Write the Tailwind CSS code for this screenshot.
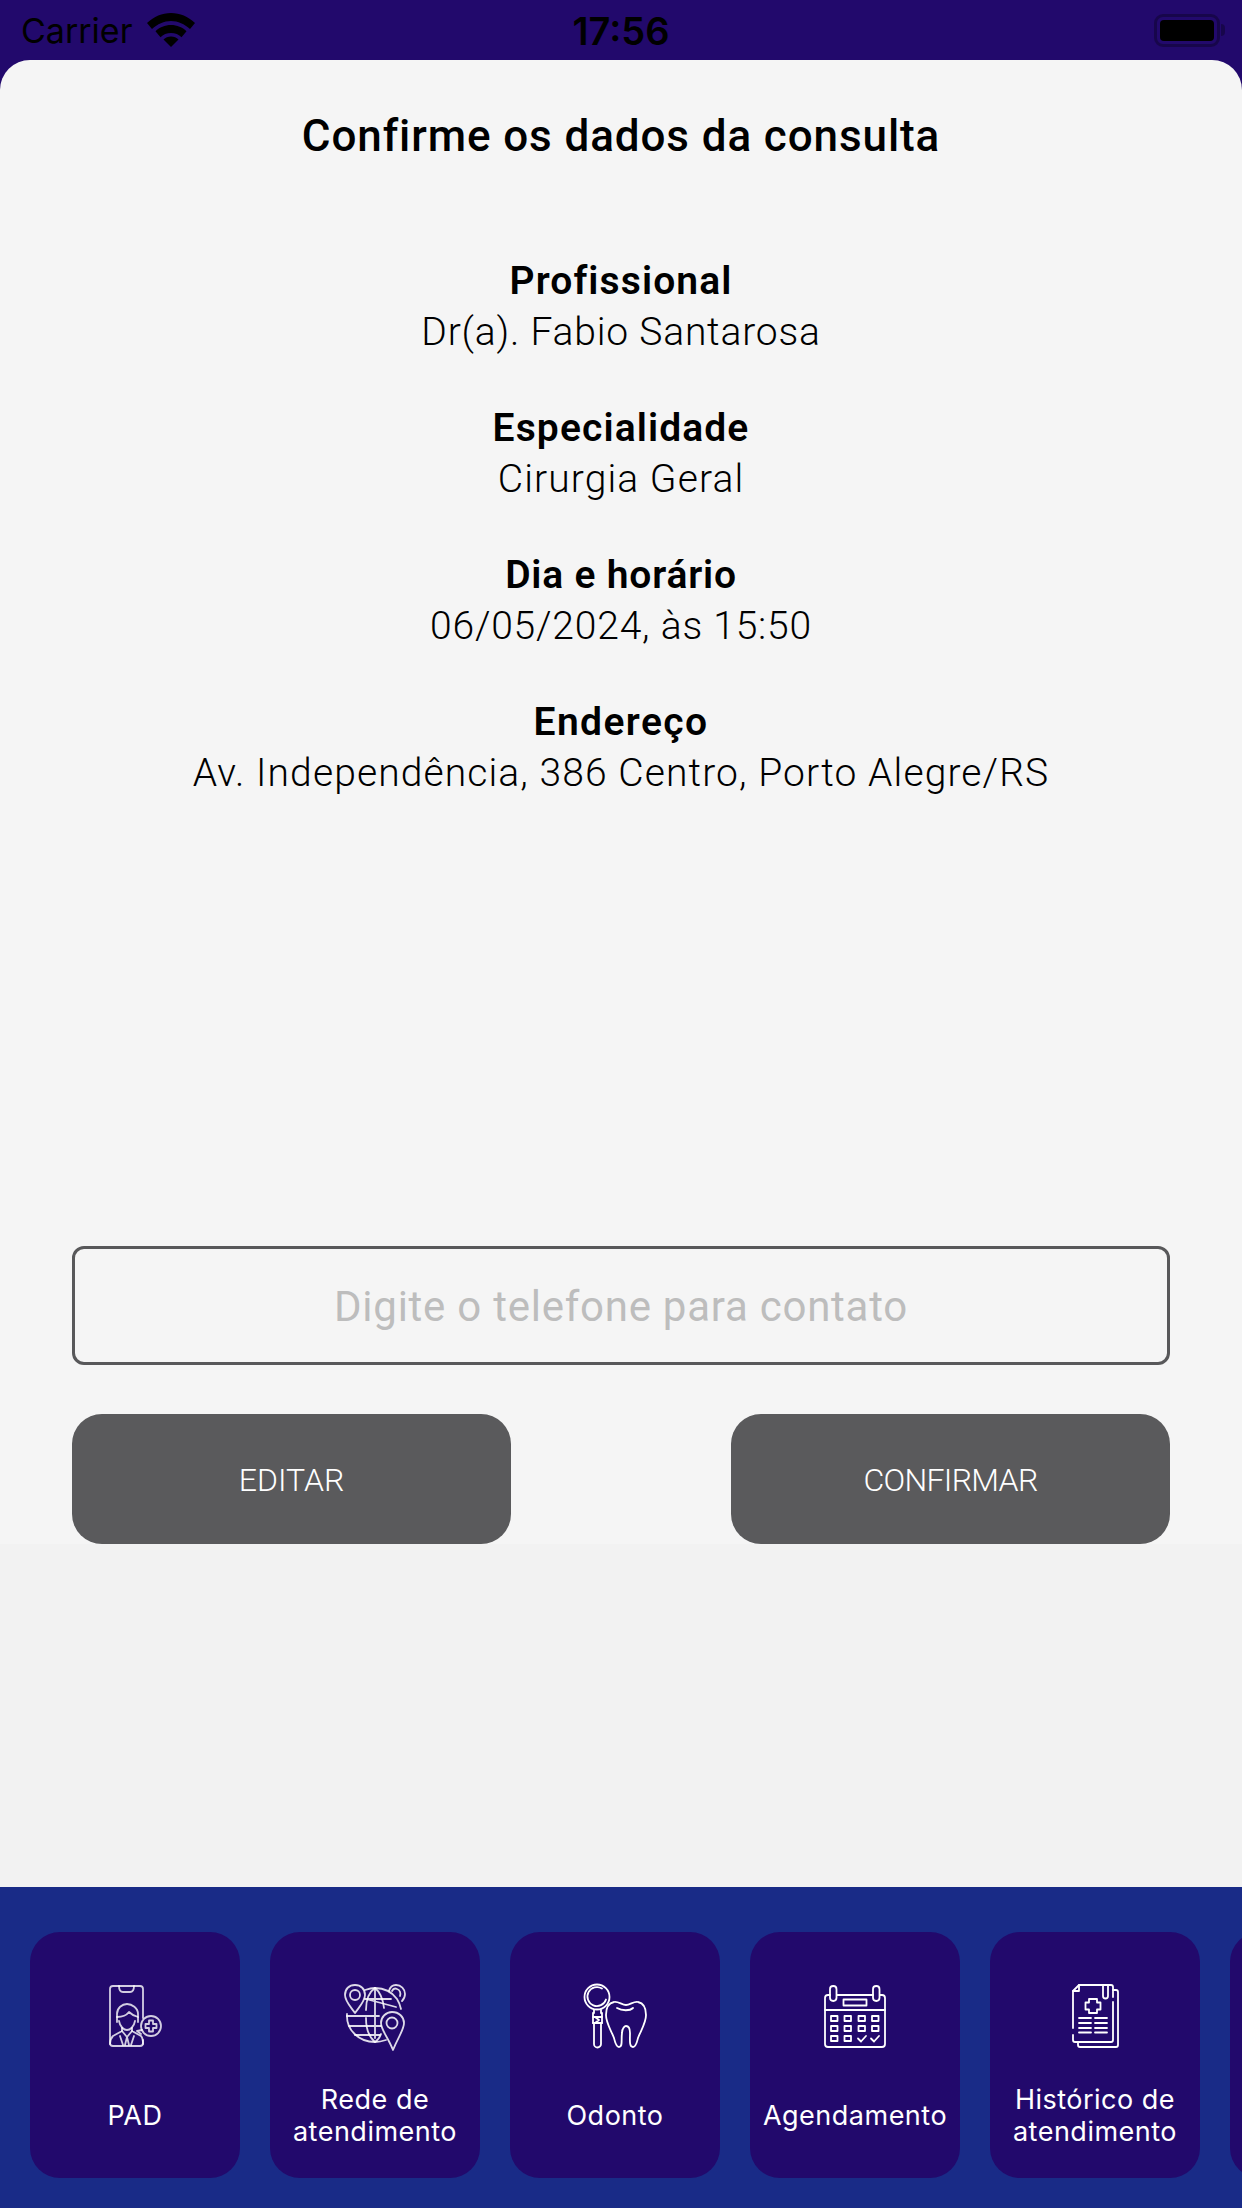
<!DOCTYPE html>
<html lang="en">
<head>
    <meta charset="UTF-8">
    <meta name="viewport" content="width=device-width, initial-scale=1.0">
    <title>Confirme os dados da consulta</title>
    <script src="https://cdn.jsdelivr.net/npm/@tailwindcss/browser@4"></script>
</head>
<body class="bg-[#f2f2f2] font-['Roboto',sans-serif]">
    <div class="w-[1242px] h-[2208px] flex flex-col overflow-hidden bg-[#22096c]">
        <!-- status bar -->
        <div class="h-[60px] shrink-0 grid grid-cols-3 items-center text-black font-['Inter',sans-serif] text-[34px]">
            <div class="flex items-center pl-[21px] gap-[15px]">
                <span>Carrier</span>
                <svg width="48" height="34" viewBox="0 0 48 34" fill="#000">
                    <path d="M24 0C15 0 7 3.500 0 10l5 6C10.500 11 17 8 24 8s13.500 3 19 8l5-6C41 3.500 33 0 24 0z"/>
                    <path d="M24 12c-6 0-11.500 2.300-15.500 6.200l5 6C16 21.500 20 20 24 20s8 1.500 10.500 4.200l5-6C35.500 14.300 30 12 24 12z"/>
                    <path d="M24 23.500c-3 0-5.500 1-7.500 3L24 34l7.500-7.500c-2-2-4.500-3-7.500-3z"/>
                </svg>
            </div>
            <div class="text-center font-semibold text-[38px] pt-[2px]">17:56</div>
            <div class="flex justify-end items-center pr-[17px]">
                <div class="w-[66px] h-[33px] rounded-[9px] border-[3px] border-black/30 p-[3px]">
                    <div class="w-full h-full bg-black rounded-[4px]"></div>
                </div>
                <div class="w-[4px] h-[12px] ml-[1px] bg-black/30 rounded-r-full"></div>
            </div>
        </div>

        <!-- confirm sheet -->
        <div class="h-[1484px] shrink-0 bg-[#f5f5f5] rounded-t-[30px] flex flex-col items-center text-black text-center">
            <h1 class="mt-[51px] text-[44px] leading-[51px] tracking-[.9px] font-medium">Confirme os dados da consulta</h1>
            <div class="mt-[94px] flex flex-col gap-[45px] text-[39px] leading-[51px] tracking-[.8px]">
                <div>
                    <p class="font-semibold tracking-[1.1px]">Profissional</p>
                    <p class="font-light">Dr(a). Fabio Santarosa</p>
                </div>
                <div>
                    <p class="font-semibold tracking-[1.1px]">Especialidade</p>
                    <p class="font-light tracking-[1.1px]">Cirurgia Geral</p>
                </div>
                <div>
                    <p class="font-semibold">Dia e horário</p>
                    <p class="font-light">06/05/2024, às 15:50</p>
                </div>
                <div>
                    <p class="font-semibold tracking-[1.4px]">Endereço</p>
                    <p class="font-light tracking-[1.1px]">Av. Independência, 386 Centro, Porto Alegre/RS</p>
                </div>
            </div>
            <div class="mt-auto w-[1098px] flex flex-col gap-[49px]">
                <div class="h-[119px] pt-[2px] border-[3px] border-[#58585a] rounded-[12px] flex items-center justify-center text-[42px] text-[#bdbdbd] tracking-[.75px]">Digite o telefone para contato</div>
                <div class="flex justify-between">
                    <button class="w-[439px] h-[130px] rounded-[30px] bg-[#5a5a5c] text-white text-[32px] font-light pt-[2px]">EDITAR</button>
                    <button class="w-[439px] h-[130px] rounded-[30px] bg-[#5a5a5c] text-white text-[32px] font-light pt-[2px] tracking-[-.7px]">CONFIRMAR</button>
                </div>
            </div>
        </div>

        <div class="flex-1 bg-[#f2f2f2]"></div>

        <!-- bottom menu -->
        <div class="h-[321px] shrink-0 bg-[#192b87] pt-[45px] pl-[30px] flex gap-[30px] overflow-hidden font-['Inter',sans-serif] text-white text-[27px] leading-[32px] tracking-[.5px] text-center">
            <div class="w-[210px] h-[246px] shrink-0 rounded-[30px] bg-[#22096c] flex flex-col items-center pt-[38px]">
                <svg width="90" height="90" viewBox="0 0 90 90" fill="none" stroke="#fff" stroke-opacity=".8" stroke-width="1.800" stroke-linecap="round" stroke-linejoin="round">
                    <path d="M53 48V19a3 3 0 0 0-3-3H23a3 3 0 0 0-3 3v54a3 3 0 0 0 3 3h27a3 3 0 0 0 3-3v-3"/>
                    <path d="M29 16c0 4 2 6 4 6h7c2 0 4-2 4-6"/>
                    <path d="M27 52v-8c0-6 5-10 10-10s11 4 11 10v8"/>
                    <path d="M27 47c5 0 9-1 12-5 2 2 5 4 9 5"/>
                    <path d="M29 51c1 6 5 9 8 9s7-3 8-9"/>
                    <path d="M32 58v3l-9 5c-2 2-3 5-3 8M42 58v3l9 5c2 2 2 5 2 8"/>
                    <path d="M32 61l5 6 5-6M30 66l3 9M44 66l-3 9M35 75l2-8 2 8"/>
                    <circle cx="61" cy="56" r="10"/>
                    <path d="M59 50.500h4v3.500h3.500v4H63v3.500h-4V58h-3.500v-4H59z"/>
                    <path d="M52 60l-5 1 4 3"/>
                </svg>
                <div class="mt-[24px] h-[64px] flex items-center">PAD</div>
            </div>
            <div class="w-[210px] h-[246px] shrink-0 rounded-[30px] bg-[#22096c] flex flex-col items-center pt-[38px]">
                <svg width="90" height="90" viewBox="0 0 90 90" fill="none" stroke="#fff" stroke-opacity=".85" stroke-width="1.800" stroke-linecap="round" stroke-linejoin="round">
                    <path d="M35 20c3-1 7-2 10-2 9 0 17 4 22 11 2 3 3 6 4 10"/>
                    <path d="M17 44c-1 16 12 28 28 28 4 0 8-1 11-2"/>
                    <path d="M36 40c0-10 3-18 9-22 5 4 8 11 9 20M36 48c0 10 3 19 9 24 3-2 5-5 6-8"/>
                    <path d="M45 18v50M35 29h26M17 46h32M19 56h32M25 65h25M36 29l30 8"/>
                    <path d="M25 15c-6 0-10 4-10 10 0 6 5 11 10 18 5-7 10-12 10-18 0-6-4-10-10-10z"/>
                    <circle cx="25" cy="25" r="5"/>
                    <path d="M59 21c1-4 4-6 7-6 5 0 9 4 9 9 0 3-1 5-3 7M62 21c1-2 3-3 5-2 3 1 4 4 3 7"/>
                    <path d="M62 42c-6 0-11 5-11 11 0 7 7 14 12 27 5-13 11-20 11-27 0-6-5-11-12-11z"/>
                    <circle cx="62" cy="53" r="5.500"/>
                </svg>
                <div class="mt-[24px] h-[64px] flex items-center">Rede de<br>atendimento</div>
            </div>
            <div class="w-[210px] h-[246px] shrink-0 rounded-[30px] bg-[#22096c] flex flex-col items-center pt-[38px]">
                <svg width="90" height="90" viewBox="0 0 90 90" fill="none" stroke="#fff" stroke-width="1.800" stroke-linecap="round" stroke-linejoin="round">
                    <circle cx="27" cy="27" r="12.500"/>
                    <path d="M32 18.500a9.500 9.500 0 1 0 4 11"/>
                    <path d="M24 40v3h-1v10h1v21a3.500 3.500 0 0 0 7 0V53h1V43h-1v-3"/>
                    <path d="M23 47h9M23 53h9M25 47l4 3-4 3"/>
                    <path d="M56 35c-4 0-8-4-12-3-6 1-8 6-8 13 0 8 5 15 8 23 1 4 2 9 5 9 4 0 2-7 3-14 0-5 3-7 4-7 2 0 4 2 4 7 0 7-1 14 3 14 3 0 4-5 5-9 3-8 8-15 8-23 0-7-3-12-8-13-4-1-8 3-12 3z"/>
                    <path d="M47 38c5 3 13 3 16 0"/>
                </svg>
                <div class="mt-[24px] h-[64px] flex items-center">Odonto</div>
            </div>
            <div class="w-[210px] h-[246px] shrink-0 rounded-[30px] bg-[#22096c] flex flex-col items-center pt-[38px]">
                <svg width="90" height="90" viewBox="0 0 90 90" fill="none" stroke="#fff" stroke-width="1.800" stroke-linecap="round" stroke-linejoin="round">
                    <path d="M20 25h-2a3 3 0 0 0-3 3v46a3 3 0 0 0 3 3h54a3 3 0 0 0 3-3V28a3 3 0 0 0-3-3h-2M27 25h36"/>
                    <path d="M15 40h60"/>
                    <rect x="20" y="16" width="6.500" height="15" rx="3.200"/>
                    <rect x="63" y="16" width="6.500" height="15" rx="3.200"/>
                    <rect x="33.500" y="29.500" width="23" height="6"/>
                    <rect x="21" y="46" width="6.500" height="5"/>
                    <rect x="34.500" y="46" width="6.500" height="5"/>
                    <rect x="48.500" y="46" width="6.500" height="5"/>
                    <rect x="62" y="46" width="6.500" height="5"/>
                    <rect x="21" y="56" width="6.500" height="5"/>
                    <rect x="34.500" y="56" width="6.500" height="5"/>
                    <rect x="48.500" y="56" width="6.500" height="5"/>
                    <rect x="62" y="56" width="6.500" height="5"/>
                    <rect x="21" y="66" width="6.500" height="5"/>
                    <rect x="34.500" y="66" width="6.500" height="5"/>
                    <path d="M48 68.500l3 3 5-5.500M61 68.500l3 3 5-5.500"/>
                </svg>
                <div class="mt-[24px] h-[64px] flex items-center">Agendamento</div>
            </div>
            <div class="w-[210px] h-[246px] shrink-0 rounded-[30px] bg-[#22096c] flex flex-col items-center pt-[38px]">
                <svg width="90" height="90" viewBox="0 0 90 90" fill="none" stroke="#fff" stroke-width="1.800" stroke-linecap="round" stroke-linejoin="round">
                    <path d="M23 58V21l6-6h32a2 2 0 0 1 2 2v10M63 32v38a2 2 0 0 1-2 2H25a2 2 0 0 1-2-2v-5"/>
                    <path d="M23 21h6v-6"/>
                    <path d="M63 20h3a2 2 0 0 1 2 2v53a2 2 0 0 1-2 2H30a2 2 0 0 1-2-2v-3"/>
                    <path d="M53 15v11a2.500 2.500 0 0 0 5 0V16"/>
                    <path d="M39 29h8v3.500h3.500v7H47V43h-8v-3.500h-3.500v-7H39z"/>
                    <path d="M29 48h12M45 48h12M29 53h12M45 53h12M29 58h12M45 58h12M29 62.500h12M45 62.500h12"/>
                </svg>
                <div class="mt-[24px] h-[64px] flex items-center">Histórico de<br>atendimento</div>
            </div>
            <div class="w-[210px] h-[246px] shrink-0 rounded-[30px] bg-[#22096c]"></div>
        </div>
    </div>
</body>
</html>
